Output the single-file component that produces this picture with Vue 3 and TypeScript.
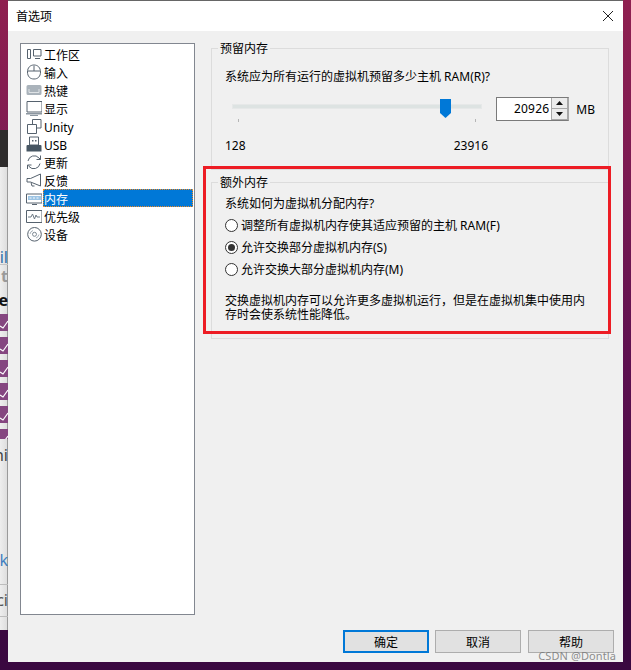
<script setup lang="ts">
import { computed } from 'vue'

interface Shape { d: string; fill?: string; stroke?: string }
interface NavItem { label: string; shapes: Shape[]; selected?: boolean }

const slate = '#56626e'

const navItems: NavItem[] = [
  { label: '工作区', shapes: [
    { d: 'M1.5 3.5h3v9h-3zM7.5 3.5h7.5v6.5H7.5zM9 12.5h5', stroke: slate },
  ] },
  { label: '输入', shapes: [
    { d: 'M8 1c3.8 0 6.5 2.6 6.5 7S12 15 8 15 1.5 12.4 1.5 8 4.200 1 8 1zM2 7h12M8 2v5', stroke: slate },
  ] },
  { label: '热键', shapes: [
    { d: 'M2 3h12a1.5 1.5 0 0 1 1.5 1.5v7A1.5 1.5 0 0 1 14 13H2a1.5 1.5 0 0 1-1.500-1.500v-7A1.5 1.5 0 0 1 2 3z', fill: '#aab3bb' },
    { d: 'M3 7v3.500h10V7', stroke: '#dfe3e6' },
  ] },
  { label: '显示', shapes: [
    { d: 'M1 1.5h15v10.5H1z', stroke: slate },
    { d: 'M0 13h16v1.5H0zM4 15h8v1H4z', fill: '#8b96a0' },
  ] },
  { label: 'Unity', shapes: [
    { d: 'M1.5 6.5h9v9h-9zM6.5 6V1.500h8.500V10H11', stroke: slate },
  ] },
  { label: 'USB', shapes: [
    { d: 'M3.5 1h9v8h-9z', stroke: slate },
    { d: 'M1.5 9h13a1 1 0 0 1 1 1v5.500H0.500V10a1 1 0 0 1 1-1z', fill: '#475663' },
    { d: 'M6 4h1.500v1.500H6zM9 4h1.500v1.500H9z', fill: slate },
  ] },
  { label: '更新', shapes: [
    { d: 'M2 7a6.3 6.3 0 0 1 11-3l1.500 1.500M14.500 1.500v4h-4M14 9.500a6.300 6.300 0 0 1-11 3l-1.500-1.500M1.500 15v-4h4', stroke: slate },
  ] },
  { label: '反馈', shapes: [
    { d: 'M1 6.500h3.500L14.500 2v12L4.500 10H1zM5 10.500l1 3.500h2.500', stroke: slate },
  ] },
  { label: '内存', selected: true, shapes: [
    { d: 'M0.500 4h15.500v9H0.500z', stroke: slate },
    { d: 'M2 6h13v4H2z', fill: '#9cc4e4' },
    { d: 'M3.500 7.500h2v1h-2zM7 7.500h2v1H7zM10.500 7.500h2v1h-2z', fill: '#f4f8fb' },
    { d: 'M6 14h5v1H6z', fill: slate },
  ] },
  { label: '优先级', shapes: [
    { d: 'M0.500 2.500h15.500v12H0.500z', stroke: slate },
    { d: 'M2 9h3l1.500-3 2 5 1.500-4 1 2h3', stroke: '#6d7a85' },
  ] },
  { label: '设备', shapes: [
    { d: 'M8.500 1.500a6.800 6.800 0 1 1 0 13.600 6.800 6.800 0 0 1 0-13.600z', stroke: slate },
    { d: 'M8.500 6.300a2 2 0 1 1 0 4 2 2 0 0 1 0-4z', stroke: '#7d8993' },
    { d: 'M4 8a4.500 4.500 0 0 1 3-3.500M13 8.500a4.500 4.500 0 0 1-3 3.500', stroke: '#aab3bb' },
  ] },
]

const radios = [
  { label: '调整所有虚拟机内存使其适应预留的主机 RAM(F)', checked: false },
  { label: '允许交换部分虚拟机内存(S)', checked: true },
  { label: '允许交换大部分虚拟机内存(M)', checked: false },
]

const minRam = 128
const maxRam = 23916
const ram = 20926
const handleLeft = computed(() => 13 + ((ram - minRam) / (maxRam - minRam)) * 237 - 5.5)

const checks = [1, 2, 3, 4, 5, 6]
</script>

<template>
  <div class="desktop">
    <aside class="behind">
      <div class="wall"></div>
      <div class="darkbar"></div>
      <div class="peek">
        <div class="frag frag-il">il</div>
        <div class="frag frag-t">t</div>
        <div class="frag frag-se">Se</div>
        <div class="checks">
          <div v-for="c in checks" :key="c" class="check">
            <svg width="8" height="17" viewBox="0 0 8 17"><path d="M0 12l3 2 5-7" fill="none" stroke="#fff" stroke-width="1.2" /></svg>
          </div>
        </div>
        <div class="frag frag-ni">ni</div>
        <div class="frag frag-k">k</div>
        <div class="frag frag-ci">ci</div>
      </div>
    </aside>

    <section class="dialog">
      <header class="titlebar">
        <span>首选项</span>
        <svg class="close" width="10" height="10" viewBox="0 0 10 10"><path d="M0 0l10 10M10 0L0 10" stroke="#222" stroke-width="1" /></svg>
      </header>

      <div class="body">
        <div class="main">
          <ul class="nav">
            <li v-for="item in navItems" :key="item.label" class="nav-item">
              <svg class="nav-icon" width="16" height="16" viewBox="0 0 16 16">
                <path
                  v-for="(s, i) in item.shapes"
                  :key="i"
                  :d="s.d"
                  :fill="s.fill ?? 'none'"
                  :stroke="s.stroke ?? 'none'"
                />
              </svg>
              <span class="nav-label" :class="{ selected: item.selected }">{{ item.label }}</span>
            </li>
          </ul>

          <div class="panel">
            <fieldset class="group group-reserved">
              <legend>预留内存</legend>
              <p class="question q1">系统应为所有运行的虚拟机预留多少主机 RAM(R)?</p>
              <div class="slider-row">
                <div class="slider">
                  <div class="track"></div>
                  <i class="tick tick-a"></i>
                  <i class="tick tick-b"></i>
                  <svg class="handle" :style="{ left: handleLeft + 'px' }" width="11" height="19" viewBox="0 0 11 19"><path d="M0 0h11v14l-5.5 5L0 14z" fill="#0078d7" /></svg>
                </div>
                <div class="spin">
                  <span class="spin-value">{{ ram }}</span>
                  <div class="spin-btns">
                    <div class="spin-btn"><svg width="7" height="4" viewBox="0 0 7 4"><path d="M3.5 0L7 4H0z" fill="#111" /></svg></div>
                    <div class="spin-btn"><svg width="7" height="4" viewBox="0 0 7 4"><path d="M0 0h7L3.5 4z" fill="#111" /></svg></div>
                  </div>
                </div>
                <span class="unit">MB</span>
              </div>
              <div class="range">
                <span>{{ minRam }}</span>
                <span>{{ maxRam }}</span>
              </div>
            </fieldset>

            <fieldset class="group group-extra">
              <legend>额外内存</legend>
              <p class="question q2">系统如何为虚拟机分配内存?</p>
              <div class="radios">
                <div v-for="r in radios" :key="r.label" class="radio-row">
                  <span class="radio"><span v-if="r.checked" class="dot"></span></span>
                  <span>{{ r.label }}</span>
                </div>
              </div>
              <p class="note">交换虚拟机内存可以允许更多虚拟机运行，但是在虚拟机集中使用内存时会使系统性能降低。</p>
            </fieldset>

            <div class="annotation"></div>
          </div>
        </div>

        <footer class="actions">
          <button class="btn default" type="button">确定</button>
          <button class="btn" type="button">取消</button>
          <button class="btn last" type="button">帮助</button>
        </footer>
      </div>
    </section>

    <span class="watermark">CSDN @Dontla</span>
  </div>
</template>

<style scoped>
.desktop {
  position: relative;
  width: 631px;
  height: 670px;
  overflow: hidden;
  display: flex;
  align-items: flex-start;
  background: linear-gradient(180deg, #8f2050 0%, #7c1a52 25%, #5d1050 55%, #3d0840 85%, #3a0840 100%);
  font-family: "Noto Sans", "Noto Sans CJK SC", sans-serif;
  font-size: 12px;
  color: #000;
}
.behind {
  width: 8px;
  height: 630px;
  flex: none;
  display: flex;
  flex-direction: column;
}
.wall { height: 130px; flex: none; }
.darkbar { height: 37px; flex: none; background: #2e2c2c; }
.peek {
  flex: 1;
  display: flex;
  flex-direction: column;
  padding-top: 83px;
  background: linear-gradient(90deg, #eeeeee, #dcdcdc);
  box-shadow: inset -1px 0 0 #9a9a9a;
  overflow: hidden;
}
.frag {
  display: flex;
  justify-content: flex-end;
  white-space: nowrap;
  height: 18px;
  line-height: 18px;
  font-size: 16px;
  flex: none;
}
.frag-il { color: #2c6fa8; height: 14px; line-height: 15px; border-bottom: 1px solid #c4c4c4; }
.frag-t { color: #9a9a9a; font-weight: 700; margin-top: 1px; height: 20px; line-height: 20px; }
.frag-se { color: #111; font-weight: 700; margin-top: 5px; }
.checks {
  display: flex;
  flex-direction: column;
  gap: 6px;
  margin-top: 5px;
}
.check { height: 17px; background: #854680; overflow: hidden; }
.check:last-child { height: 10px; }
.frag-ni { color: #444; margin-top: 7px; }
.frag-k { color: #3f7fc0; margin-top: 87px; }
.frag-ci {
  color: #555;
  margin-top: 15px;
  height: 33px;
  line-height: 30px;
  box-sizing: border-box;
  border-top: 1px solid #bdbdbd;
  border-bottom: 1px solid #bdbdbd;
}

.dialog {
  width: 615px;
  height: 662px;
  flex: none;
  display: flex;
  flex-direction: column;
  background: #f0f0f0;
}
.titlebar {
  height: 31px;
  flex: none;
  display: flex;
  align-items: center;
  justify-content: space-between;
  padding: 0 10px 0 8px;
  background: #fff;
  border-top: 1px solid #666;
  box-sizing: border-box;
  font-size: 12px;
}
.body {
  flex: 1;
  display: flex;
  flex-direction: column;
  padding: 9px 9px 9px 12px;
  min-height: 0;
}
.main {
  flex: 1;
  display: flex;
  min-height: 0;
}
.nav {
  width: 175px;
  height: 572px;
  margin: 3px 0 0;
  padding: 1px 1px 0 0;
  list-style: none;
  box-sizing: border-box;
  background: #fff;
  border: 1px solid #828790;
  flex: none;
}
.nav-item {
  height: 18px;
  display: flex;
  align-items: center;
}
.nav-icon { margin-left: 5px; flex: none; width: 16px; height: 16px; }
.nav-label {
  flex: 1;
  height: 18px;
  line-height: 21px;
  margin-left: 1px;
  padding-left: 1px;
  box-sizing: border-box;
  white-space: nowrap;
  overflow: hidden;
}
.nav-label.selected {
  background: #0078d7;
  color: #fff;
  outline: 1px dotted #f08a24;
  outline-offset: -1px;
}
.panel {
  position: relative;
  width: 398px;
  margin-left: 16px;
  display: flex;
  flex-direction: column;
  gap: 4px;
}
.group {
  margin: 0;
  padding: 0 13px;
  min-width: 0;
  border: 1px solid #dcdcdc;
  box-sizing: border-box;
}
.group legend {
  margin-left: -7px;
  padding: 0 2px;
  height: 16px;
  line-height: 18px;
  font-size: 12px;
}
.group-reserved { height: 130px; }
.group-extra { height: 165px; }
.question, .note { margin: 0; line-height: 14px; }
.q1 { padding-top: 14px; }
.q2 { padding-top: 7px; }
.slider-row {
  display: flex;
  align-items: flex-start;
  margin-top: 13px;
}
.slider {
  position: relative;
  width: 256px;
  height: 24px;
  flex: none;
}
.track {
  width: 248px;
  height: 3px;
  margin: 8px 0 0 8px;
  background: #dde3e2;
  box-shadow: 0 0 0 1px #e6e8e8;
}
.tick {
  position: absolute;
  top: 22px;
  width: 1px;
  height: 3px;
  background: #b5b5b5;
}
.tick-a { left: 13px; }
.tick-b { left: 250px; }
.handle { position: absolute; top: 2px; }
.spin {
  margin-left: 15px;
  width: 76px;
  height: 24px;
  box-sizing: border-box;
  display: flex;
  background: #fff;
  border: 1px solid #7a7a7a;
  border-right-color: #a8a8a8;
}
.spin-value {
  flex: 1;
  text-align: right;
  padding-right: 2px;
  line-height: 21px;
  font-size: 12px;
  letter-spacing: 0.2px;
}
.spin-btns {
  width: 17px;
  flex: none;
  display: flex;
  flex-direction: column;
  gap: 1px;
  border-left: 1px solid #a8a8a8;
  background: #a8a8a8;
  box-sizing: border-box;
  padding: 0 1px 1px 0;
}
.spin-btn {
  flex: 1;
  display: flex;
  align-items: center;
  justify-content: center;
  background: #ececec;
}
.unit { margin-left: 7px; line-height: 24px; padding-top: 1px; }
.range {
  display: flex;
  justify-content: space-between;
  width: 263px;
  margin-top: 17px;
  line-height: 14px;
}
.radios { margin-top: 3px; display: flex; flex-direction: column; }
.radio-row {
  height: 22px;
  display: flex;
  align-items: center;
  gap: 3px;
  white-space: nowrap;
}
.radio {
  width: 13px;
  height: 13px;
  flex: none;
  box-sizing: border-box;
  border: 1px solid #333;
  border-radius: 50%;
  background: #fff;
  display: flex;
  align-items: center;
  justify-content: center;
}
.dot { width: 7px; height: 7px; border-radius: 50%; background: #333; }
.note { margin-top: 14px; width: 371px; line-height: 13.5px; }
.annotation {
  position: absolute;
  left: -8px;
  top: 126px;
  width: 408px;
  height: 168px;
  box-sizing: border-box;
  border: 3px solid #ed1c24;
  pointer-events: none;
}
.actions {
  display: flex;
  justify-content: flex-end;
  gap: 6px;
  flex: none;
}
.btn {
  width: 86px;
  height: 23px;
  padding: 0;
  background: #e1e1e1;
  border: 1px solid #adadad;
  font: inherit;
  color: #000;
  box-sizing: border-box;
}
.btn.last { margin-left: 1px; }
.btn.default { border: 2px solid #0078d7; }
.watermark {
  position: absolute;
  right: 15px;
  bottom: 8px;
  font-size: 11px;
  line-height: 12px;
  letter-spacing: 0.1px;
  color: rgba(120, 120, 120, 0.85);
}
</style>
